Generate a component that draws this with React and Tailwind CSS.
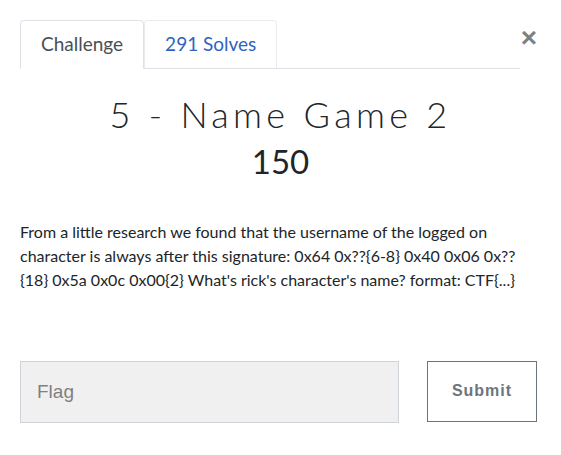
export default function App() {
  return (
    <div className="w-[561px] h-[455px] bg-white px-[20px] pt-[20px] font-['Lato',sans-serif] text-[#212529]">
      <div className="flex items-start">
        <nav className="flex w-[500px] border-b border-[#dee2e6]">
          <div className="-mb-px h-[49px] px-[20px] flex items-center rounded-t border border-[#dee2e6] border-b-white bg-white text-[19px] text-[#495057]">
            Challenge
          </div>
          <div className="h-[48px] px-[20px] flex items-center rounded-t border border-b-0 border-[#e9ecef] text-[19px] text-[#2f63c2]">
            291 Solves
          </div>
        </nav>
        <button className="ml-auto mr-[4px] mt-[4px] text-[28px] font-bold leading-none text-black/50 font-['Liberation_Sans',sans-serif]">
          ×
        </button>
      </div>

      <h2 className="mt-[24px] text-center text-[36px] leading-[1.2] font-light tracking-[0.12em]">
        5 - Name Game 2
      </h2>
      <h3 className="mt-[6px] text-center text-[33px] leading-[1.2]">150</h3>

      <p className="mt-[38px] text-[16px] leading-[24px]">
        From a little research we found that the username of the logged on character is always after this
        signature: 0x64 0x??{"{6-8}"} 0x40 0x06 0x?? {"{18}"} 0x5a 0x0c 0x00{"{2}"} What's rick's character's name?
        format: CTF{"{...}"}
      </p>

      <div className="mt-[69px] flex items-start gap-[28px]">
        <input
          placeholder="Flag"
          className="w-[379px] h-[62px] px-[16px] bg-[#f0f0f0] border border-[#ced4da] text-[19px] font-['Liberation_Sans',sans-serif] placeholder:text-[#808080] outline-none"
        />
        <button className="w-[110px] h-[61px] border border-[#6c757d] text-[16px] font-bold tracking-[1px] text-[#6c757d] font-['Liberation_Sans',sans-serif]">
          Submit
        </button>
      </div>
    </div>
  )
}
